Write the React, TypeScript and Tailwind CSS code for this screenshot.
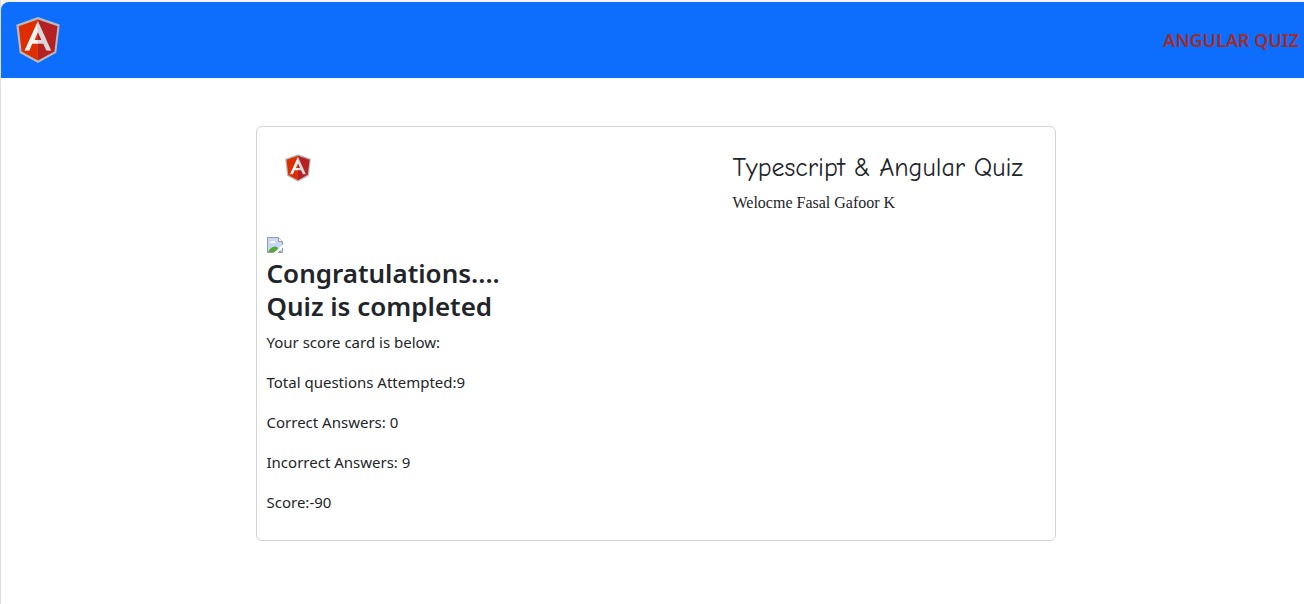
function ShieldLogo({ className }: { className: string }) {
  return (
    <svg viewBox="4 1 120 126" className={className} role="img" aria-label="Angular logo">
      <path fill="#b9b9b9" d="M63.8 1 4.5 21.9l9.4 77.6 50 27.5 50.2-27.8 9.3-77.7z" />
      <path fill="#b52024" d="M117.5 26 63.7 7.6v112.8l45.1-25z" />
      <path fill="#de2e00" d="m11.2 26.3 8 69.5 44.5 24.6V7.6z" />
      <path fill="#f4f4f4" d="M63.7 11.7 27 93.2l13.7-.2L48 74.6h15.7V63.8h-9L63.7 43z" />
      <path fill="#d8d8d8" d="M63.7 11.7V43l9.6 20.8h-9.6v10.8h14.7L86.7 93l13.7.2z" />
    </svg>
  );
}

function MissingPicture() {
  return (
    <svg viewBox="0 0 16 16" className="block size-4" aria-hidden="true">
      <path fill="#c6d8f5" d="M.5.5h11l4 4v11H.5z" />
      <path fill="#fff" d="M3 6a1.5 1.5 0 0 1 2-1.5A2 2 0 0 1 8.5 6z" />
      <path fill="#55a83a" d="M1 15c2-4 5-5.5 7-5.5s4 2 6 5.5z" />
      <path fill="none" stroke="#9b9b9b" d="M8 15.5H.5V.5h11l4 4V8M15.5 11v4.5H11" />
      <path fill="#fff" d="m6.5 16 9.5-8.5v3L10.5 16z" />
      <path fill="#fff" stroke="#9b9b9b" d="M11.5.5v4h4" />
    </svg>
  );
}

const results = [
  "Your score card is below:",
  "Total questions Attempted:9",
  "Correct Answers: 0",
  "Incorrect Answers: 9",
  "Score:-90",
];

export default function App() {
  return (
    <div className="min-h-screen border-l border-[#dedede] bg-white font-['Segoe_UI','Noto_Sans',sans-serif] text-[#212529]">
      <div className="bg-linear-to-b from-[#f3f3f3] to-[#f3f3f3] bg-[length:100%_12px] bg-no-repeat pt-0.5">
        <header className="flex h-19 items-center justify-between rounded-tl-lg bg-[#0d6efd] pr-[5px] pl-[15px]">
          <a href="#home">
            <ShieldLogo className="h-[46px] w-11" />
          </a>
          <span className="text-lg font-semibold text-[#a52a2a]">ANGULAR QUIZ</span>
        </header>
      </div>

      <main className="py-12 pl-1.5">
        <section className="mx-auto w-full max-w-[800px] rounded-md border border-[#d2d3d4] px-2.5 pt-[25px] pb-[26px]">
          <div className="flex items-start justify-between pr-4 pl-[18px]">
            <ShieldLogo className="mt-0.5 h-7 w-[26px]" />
            <div className="w-[296px]">
              <h2 className="text-[26px] leading-8 whitespace-nowrap font-['Comic_Sans_MS','Comic_Neue',Lato,sans-serif]">
                Typescript &amp; Angular Quiz
              </h2>
              <p className="mt-[7px] font-['Liberation_Serif',serif] text-base leading-6">
                Welocme Fasal Gafoor K
              </p>
            </div>
          </div>

          <div className="mt-[22px]">
            <MissingPicture />
            <h1 className="mt-1 text-[26px] leading-[33px] font-semibold">
              Congratulations....
              <br />
              Quiz is completed
            </h1>
            <div className="mt-[7px] flex flex-col gap-4 text-[15px] leading-6">
              {results.map((line) => (
                <p key={line}>{line}</p>
              ))}
            </div>
          </div>
        </section>
      </main>
    </div>
  );
}
